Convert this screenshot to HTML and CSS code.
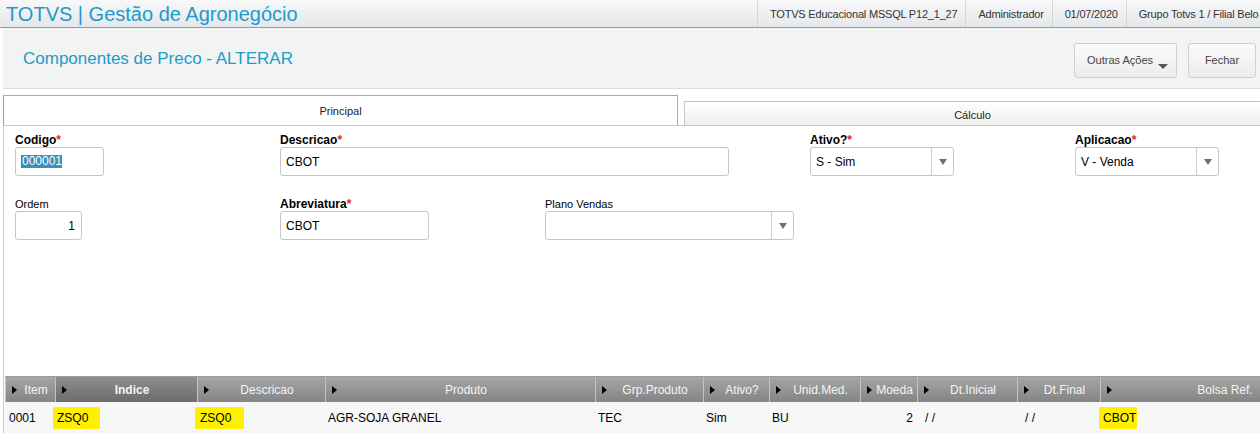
FILE: index.html
```html
<!DOCTYPE html>
<html lang="pt-BR">
<head>
<meta charset="utf-8">
<title>Componentes de Preco - ALTERAR</title>
<link rel="stylesheet" href="styles.css">
</head>
<body>
<div class="topbar">
  <div class="brand">TOTVS | Gestão de Agronegócio</div>
  <div class="info">
    <span class="info-item">TOTVS Educacional MSSQL P12_1_27</span>
    <span class="info-item">Administrador</span>
    <span class="info-item">01/07/2020</span>
    <span class="info-item info-last">Grupo Totvs 1 / Filial Belo</span>
  </div>
</div>

<div class="page-head">
  <h1 class="page-title">Componentes de Preco - ALTERAR</h1>
  <div class="actions">
    <button class="btn btn-menu"><span class="btn-label">Outras Ações</span><span class="caret"></span></button>
    <button class="btn btn-close">Fechar</button>
  </div>
</div>

<div class="tabs">
  <div class="tab tab-active">Principal</div>
  <div class="tab tab-idle">Cálculo</div>
</div>

<div class="panel">
  <div class="form">
    <div class="field f-codigo">
      <label class="lbl req">Codigo<span class="star">*</span></label>
      <div class="inp w-codigo"><span class="sel">000001</span></div>
    </div>
    <div class="field f-desc">
      <label class="lbl req">Descricao<span class="star">*</span></label>
      <div class="inp w-desc">CBOT</div>
    </div>
    <div class="field f-ativo">
      <label class="lbl req">Ativo?<span class="star">*</span></label>
      <div class="inp select w-ativo"><span class="sel-val">S - Sim</span><span class="sel-btn"><span class="tri-down"></span></span></div>
    </div>
    <div class="field f-aplic">
      <label class="lbl req">Aplicacao<span class="star">*</span></label>
      <div class="inp select w-aplic"><span class="sel-val">V - Venda</span><span class="sel-btn"><span class="tri-down"></span></span></div>
    </div>
    <div class="field f-ordem">
      <label class="lbl">Ordem</label>
      <div class="inp num w-ordem">1</div>
    </div>
    <div class="field f-abrev">
      <label class="lbl req">Abreviatura<span class="star">*</span></label>
      <div class="inp w-abrev">CBOT</div>
    </div>
    <div class="field f-plano">
      <label class="lbl">Plano Vendas</label>
      <div class="inp select w-plano"><span class="sel-val"></span><span class="sel-btn"><span class="tri-down"></span></span></div>
    </div>
  </div>

  <div class="grid">
    <div class="grid-head">
      <div class="hc"><span class="tri-right"></span><span class="hc-text">Item</span></div>
      <div class="hc hc-sorted"><span class="tri-right"></span><span class="hc-text">Indice</span></div>
      <div class="hc"><span class="tri-right"></span><span class="hc-text">Descricao</span></div>
      <div class="hc"><span class="tri-right"></span><span class="hc-text">Produto</span></div>
      <div class="hc"><span class="tri-right"></span><span class="hc-text">Grp.Produto</span></div>
      <div class="hc"><span class="tri-right"></span><span class="hc-text">Ativo?</span></div>
      <div class="hc"><span class="tri-right"></span><span class="hc-text">Unid.Med.</span></div>
      <div class="hc"><span class="tri-right"></span><span class="hc-text">Moeda</span></div>
      <div class="hc"><span class="tri-right"></span><span class="hc-text">Dt.Inicial</span></div>
      <div class="hc"><span class="tri-right"></span><span class="hc-text">Dt.Final</span></div>
      <div class="hc"><span class="tri-right"></span><span class="hc-text">Bolsa Ref.</span></div>
    </div>
    <div class="grid-row">
      <div class="c c-item">0001</div>
      <div class="c c-tight"><span class="hl hl-a">ZSQ0</span></div>
      <div class="c c-tight"><span class="hl hl-b">ZSQ0</span></div>
      <div class="c">AGR-SOJA GRANEL</div>
      <div class="c">TEC</div>
      <div class="c">Sim</div>
      <div class="c">BU</div>
      <div class="c c-num">2</div>
      <div class="c c-date">/ /</div>
      <div class="c c-date">/ /</div>
      <div class="c c-tight"><span class="hl hl-c">CBOT</span></div>
    </div>
  </div>
</div>
</body>
</html>
```

FILE: styles.css
```css
* { box-sizing: border-box; }

html, body {
  margin: 0;
  padding: 0;
  background: #ffffff;
  font-family: "Liberation Sans", Arial, sans-serif;
  font-size: 12px;
  color: #000;
  width: 1260px;
  height: 433px;
  overflow: hidden;
}

/* ---------- top bar ---------- */
.topbar {
  display: flex;
  align-items: center;
  height: 28px;
  background: linear-gradient(#f8f8f9, #e5e7ea);
  border-bottom: 1px solid #9a9a9a;
  overflow: hidden;
  white-space: nowrap;
}

.brand {
  flex: 0 0 757px;
  padding-left: 6px;
  font-size: 20px;
  line-height: 26px;
  color: #1d9bc9;
}

.info {
  display: flex;
  flex: 1 1 auto;
  min-width: 0;
  height: 26px;
  align-items: stretch;
}

.info-item {
  display: flex;
  align-items: center;
  flex: 0 0 auto;
  padding: 0 8px 0 12px;
  border-left: 1px solid #d4d6d9;
  color: #333;
  font-size: 11px;
  letter-spacing: -0.2px;
}

.info-last {
  flex: 1 1 auto;
  min-width: 0;
  padding-right: 0;
}

/* ---------- page header ---------- */
.page-head {
  display: flex;
  align-items: center;
  justify-content: space-between;
  margin-left: 3px;
  height: 61px;
  padding: 1px 4px 0 20px;
  background: #f2f3f3;
  border-bottom: 1px solid #dcdcdc;
}

.page-title {
  margin: 0;
  font-weight: normal;
  font-size: 17px;
  color: #1d9bc9;
}

.actions {
  display: flex;
  gap: 11px;
  margin-top: 3px;
}

.btn {
  display: flex;
  align-items: center;
  justify-content: center;
  height: 35px;
  padding: 0;
  border: 1px solid #d0d0d0;
  border-radius: 3px;
  background: linear-gradient(#fbfbfb, #ececec);
  font-family: "Liberation Sans", Arial, sans-serif;
  font-size: 11px;
  color: #444;
}

.btn-menu {
  width: 103px;
  justify-content: flex-start;
  padding: 0 8px 0 12px;
}

.caret {
  align-self: flex-end;
  margin: 0 0 8px auto;
  width: 0;
  height: 0;
  border-left: 5px solid transparent;
  border-right: 5px solid transparent;
  border-top: 5px solid #555;
}

.btn-close { width: 68px; }

/* ---------- tabs ---------- */
.tabs {
  display: flex;
  align-items: flex-end;
  height: 30px;
  margin: 6px 0 0 3px;
}

.tab {
  display: flex;
  align-items: center;
  justify-content: center;
  font-size: 11px;
  color: #222;
}

.tab-active {
  width: 675px;
  height: 30px;
  border: 1px solid #aaaaaa;
  border-bottom: none;
  border-left-color: #9a9a9a;
  background: #ffffff;
}

.tab-idle {
  flex: 1;
  height: 24px;
  margin-left: 6px;
  border-top: 1px solid #c6c6c6;
  border-left: 1px solid #c6c6c6;
  background: linear-gradient(#ffffff, #efefef);
  padding-top: 2px;
}

/* ---------- panel / form ---------- */
.panel {
  display: flex;
  flex-direction: column;
  margin-left: 3px;
  height: 308px;
  border-left: 1px solid #c8c8c8;
  border-top: 1px solid #c8c8c8;
}

.form {
  flex: 0 0 250px;
  display: grid;
  grid-template-columns: repeat(5, 265px);
  grid-template-rows: 43px 43px;
  row-gap: 21px;
  align-content: start;
  padding: 7px 0 0 11px;
}

.field {
  display: flex;
  flex-direction: column;
}

.f-codigo { grid-column: 1; grid-row: 1; }
.f-desc   { grid-column: 2 / span 2; grid-row: 1; }
.f-ativo  { grid-column: 4; grid-row: 1; }
.f-aplic  { grid-column: 5; grid-row: 1; }
.f-ordem  { grid-column: 1; grid-row: 2; }
.f-abrev  { grid-column: 2; grid-row: 2; }
.f-plano  { grid-column: 3; grid-row: 2; }

.lbl {
  height: 14px;
  line-height: 14px;
  font-size: 11px;
  color: #000;
}

.lbl.req {
  font-weight: bold;
  font-size: 12px;
}

.star { color: #e8202a; }

.inp {
  display: flex;
  align-items: center;
  height: 29px;
  padding: 0 5px;
  border: 1px solid #c6c6c6;
  border-radius: 3px;
  background: #fff;
  font-size: 12px;
  color: #000;
  white-space: nowrap;
}

.inp.num { justify-content: flex-end; padding-right: 6px; }

.sel {
  background: #3b8fbb;
  color: #fff;
  border-left: 1px solid #c0504d;
  line-height: 13px;
}

.select { padding-right: 0; }
.sel-val { flex: 1; }

.sel-btn {
  display: flex;
  align-items: center;
  justify-content: center;
  width: 22px;
  height: 100%;
  border-left: 1px solid #cfcfcf;
}

.tri-down {
  width: 0;
  height: 0;
  border-left: 4px solid transparent;
  border-right: 4px solid transparent;
  border-top: 6px solid #6d6e72;
}

.w-codigo { width: 89px; }
.w-desc   { width: 449px; }
.w-ativo  { width: 144px; }
.w-aplic  { width: 144px; }
.w-ordem  { width: 67px; }
.w-abrev  { width: 149px; }
.w-plano  { width: 249px; }

/* ---------- grid ---------- */
.grid {
  flex: 1;
  margin-left: 1px;
  border-top: 1px solid #9c9c9c;
  overflow: hidden;
}

.grid-head,
.grid-row {
  display: grid;
  grid-template-columns: 50px 142px 128px 270px 108px 66px 91px 57px 100px 83px 238px;
}

.grid-head {
  height: 25px;
}

.hc {
  display: flex;
  align-items: center;
  padding-left: 6px;
  background: linear-gradient(#a6a6a6, #848484);
  border-left: 1px solid #c4c4c4;
  color: #f4f4f4;
  font-size: 12px;
  white-space: nowrap;
  overflow: hidden;
}

.hc-sorted {
  background: linear-gradient(#8d8d8d, #6c6c6c);
  font-weight: bold;
}

.tri-right {
  flex: 0 0 auto;
  width: 0;
  height: 0;
  border-top: 4px solid transparent;
  border-bottom: 4px solid transparent;
  border-left: 5px solid #000;
}

.hc-text {
  flex: 1;
  text-align: center;
}

.grid-row {
  height: 31px;
  background: #f7f7f7;
}

.c {
  display: flex;
  align-items: center;
  padding-left: 3px;
  font-size: 12px;
  color: #000;
  white-space: nowrap;
}

.c-item { padding-left: 4px; }
.c-tight { padding-left: 0; }
.c-num { justify-content: flex-end; padding-right: 4px; }
.c-date { padding-left: 8px; }

.hl {
  background: #fff000;
  line-height: 14px;
  border-radius: 2px;
}

.hl-a { padding: 4px 12px 4px 4px; margin-left: -2px; }
.hl-b { padding: 4px 13px 4px 5px; margin-left: -2px; }
.hl-c { padding: 4px 1px 4px 4px; margin-left: -1px; }
```
